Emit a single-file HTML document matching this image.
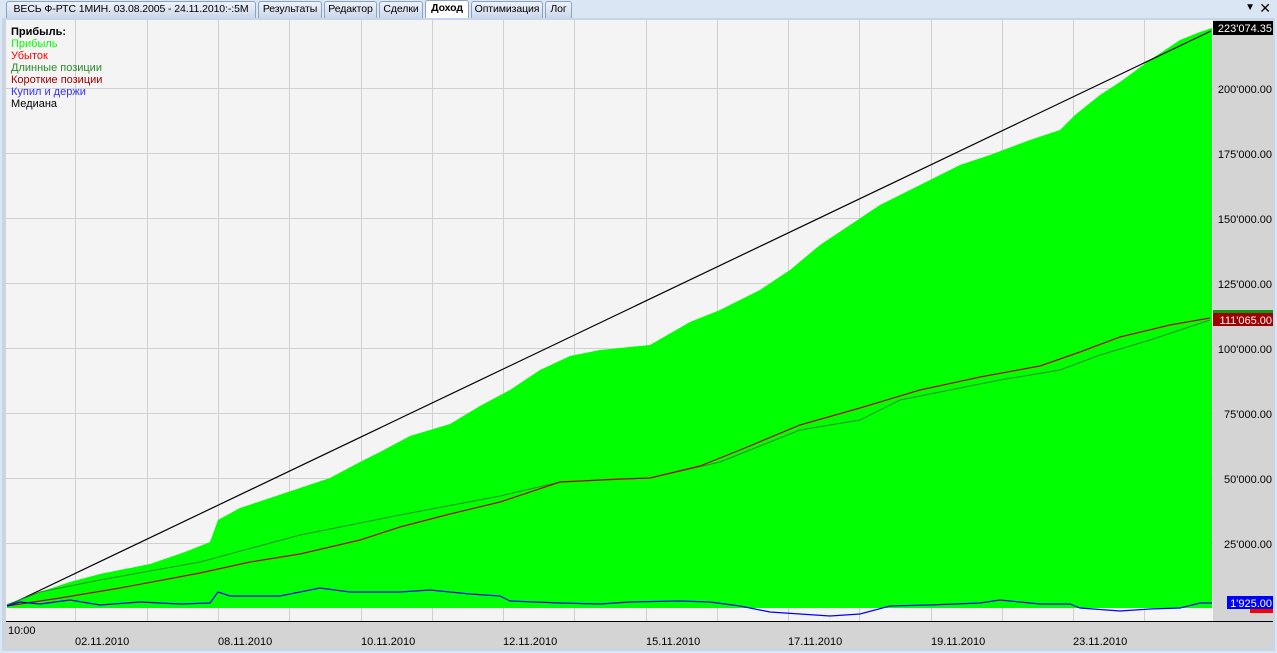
<!DOCTYPE html>
<html><head><meta charset="utf-8"><style>
*{margin:0;padding:0;box-sizing:border-box}
body{width:1277px;height:653px;background:#dbe6f4;font-family:"Liberation Sans",sans-serif;overflow:hidden;position:relative}
.tab{position:absolute;top:1px;height:17px;font-size:10.5px;line-height:15px;padding:0 1px;border:1px solid #8da2c0;border-bottom:none;border-radius:3px 3px 0 0;background:linear-gradient(#eef3fa,#c9d7ea);color:#000;white-space:nowrap;overflow:hidden;text-align:center;letter-spacing:-0.1px}
.tab.a{background:#fff;font-weight:bold;top:0;height:18px}
</style></head><body>
<div class="tab" style="left:6px;width:250px">ВЕСЬ Ф-РТС 1МИН. 03.08.2005 - 24.11.2010:-:5M</div>
<div class="tab" style="left:258px;width:64px">Результаты</div>
<div class="tab" style="left:324px;width:53px">Редактор</div>
<div class="tab" style="left:379px;width:44px">Сделки</div>
<div class="tab a" style="left:425px;width:44px">Доход</div>
<div class="tab" style="left:471px;width:72px">Оптимизация</div>
<div class="tab" style="left:545px;width:27px">Лог</div>
<div style="position:absolute;right:22px;top:2px;font-size:10px">&#9660;</div>
<div style="position:absolute;right:6px;top:0px;font-size:14px">✕</div>
<div style="position:absolute;left:2px;top:18px;width:1273px;height:633px;border:2px solid #c5d5ea;background:#d4d4d4"></div>
<svg style="position:absolute;left:0;top:0" width="1277" height="653" font-family="'Liberation Sans',sans-serif">
<rect x="6" y="20" width="1207" height="601" fill="#f4f4f4"/>
<g stroke="#d0d0d0" stroke-width="1">
<path d="M75.5 20V621M147.5 20V621M218.5 20V621M289.5 20V621M361.5 20V621M432.5 20V621M503.5 20V621M574.5 20V621M646.5 20V621M717.5 20V621M788.5 20V621M859.5 20V621M931.5 20V621M1002.5 20V621M1073.5 20V621M1144.5 20V621"/>
<path d="M6 88.5H1213M6 153.5H1213M6 218.5H1213M6 283.5H1213M6 348.5H1213M6 413.5H1213M6 478.5H1213M6 543.5H1213"/>
</g>
<polygon fill="#00ff00" points="7,608 7,604 40,592 70,582 100,574 150,564 185,552 210,542 218,520 240,508 300,488 330,478 360,462 380,452 410,436 450,424 480,406 510,390 540,370 570,356 600,350 650,345 690,322 720,310 760,290 790,270 820,245 850,225 880,205 920,185 960,165 990,155 1030,140 1060,130 1075,115 1100,95 1120,82 1150,60 1180,40 1200,32 1212,28 1212,608"/>
<line x1="7" y1="606" x2="1211" y2="31" stroke="#000" stroke-width="1.2"/>
<polyline fill="none" stroke="#2a8a2a" stroke-width="1" points="7,605 40,592 100,580 200,562 300,535 400,515 500,496 560,482 650,478 720,462 800,430 860,420 900,400 1000,380 1060,370 1100,355 1150,340 1210,320"/>
<polyline fill="none" stroke="#c00000" stroke-width="1.2" points="7,606 60,598 120,588 200,573 250,562 300,554 360,540 400,527 450,514 500,502 560,482 620,479 650,478 700,466 740,450 800,425 860,408 920,390 980,377 1040,366 1080,352 1120,337 1170,325 1210,318"/>
<polyline fill="none" stroke="#0000ff" stroke-width="1.2" points="7,606 20,602 40,604 70,600 100,605 140,602 180,604 210,603 218,592 230,596 280,596 320,588 350,592 400,592 430,590 470,594 500,596 510,601 560,603 600,604 630,602 680,601 710,602 740,606 770,612 800,614 830,616 860,614 890,606 930,605 980,603 1000,600 1040,604 1070,604 1080,608 1120,611 1150,609 1180,608 1200,603 1212,603"/>
<line x1="6" y1="621.5" x2="1273" y2="621.5" stroke="#000"/>
<g font-size="11" fill="#000" text-anchor="end">
<text x="1272" y="93">200'000.00</text><text x="1272" y="158">175'000.00</text><text x="1272" y="223">150'000.00</text><text x="1272" y="288">125'000.00</text><text x="1272" y="353">100'000.00</text><text x="1272" y="418">75'000.00</text><text x="1272" y="483">50'000.00</text><text x="1272" y="548">25'000.00</text>
</g>
<rect x="1213" y="21" width="60" height="14" fill="#000"/><text x="1272" y="32" font-size="11" fill="#fff" text-anchor="end">223'074.35</text>
<rect x="1213" y="310" width="60" height="3" fill="#0a9a0a"/>
<rect x="1213" y="313" width="60" height="13" fill="#a00000"/><text x="1272" y="324" font-size="11" fill="#fff" text-anchor="end">111'065.00</text>
<rect x="1250" y="605" width="23" height="8" fill="#ff0000"/>
<rect x="1227" y="596" width="46" height="13" fill="#0000ff"/><text x="1272" y="607" font-size="11" fill="#fff" text-anchor="end">1'925.00</text>
<g font-size="11" fill="#000">
<text x="8" y="634">10:00</text>
<text x="75" y="645">02.11.2010</text><text x="218" y="645">08.11.2010</text><text x="361" y="645">10.11.2010</text><text x="503" y="645">12.11.2010</text><text x="646" y="645">15.11.2010</text><text x="788" y="645">17.11.2010</text><text x="931" y="645">19.11.2010</text><text x="1073" y="645">23.11.2010</text>
</g>
<g font-size="11">
<text x="11" y="35" font-weight="bold">Прибыль:</text>
<text x="11" y="47" fill="#00ff00">Прибыль</text>
<text x="11" y="59" fill="#ff0000">Убыток</text>
<text x="11" y="71" fill="#2a8a2a">Длинные позиции</text>
<text x="11" y="83" fill="#a00000">Короткие позиции</text>
<text x="11" y="95" fill="#3030ff">Купил и держи</text>
<text x="11" y="107" fill="#000">Медиана</text>
</g>
</svg>
</body></html>
